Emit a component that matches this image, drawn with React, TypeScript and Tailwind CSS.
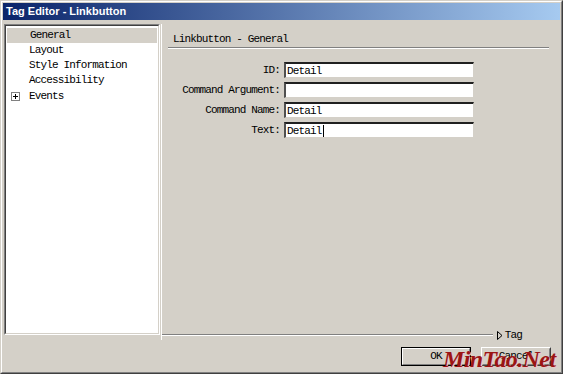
import React from "react";

const mono = { fontFamily: '"Liberation Mono", "DejaVu Sans Mono", monospace' };

function Field({ label, value, caret }: { label: string; value: string; caret?: boolean }) {
  return (
    <>
      <div className="text-right text-[11px] tracking-[-0.85px] leading-[16px] text-black pr-[4px]">{label}</div>
      <div className="h-[16px] bg-white border-t-2 border-l-2 border-t-[#202020] border-l-[#505050] border-b border-r border-b-[#d4d0c8] border-r-[#d4d0c8] flex items-center pl-[1px] text-[11px] tracking-[-0.85px] leading-[12px] text-black">
        <span>{value}</span>
        {caret && <span className="inline-block w-[1px] h-[12px] bg-black ml-[1px]" />}
      </div>
    </>
  );
}

export default function App() {
  const tree = ["General", "Layout", "Style Information", "Accessibility"];
  return (
    <div className="w-[563px] h-[374px] overflow-hidden bg-white">
      <div className="w-[563px] h-[374px] relative bg-[#d4d0c8] border border-[#d4d0c8] border-r-[#404040] border-b-[#404040] flex flex-col" style={mono}>
        <div className="border border-white border-r-[#808080] border-b-[#808080] flex-1 flex flex-col p-[1px]">
          {/* Title bar */}
          <div
            className="h-[17px] shrink-0 flex items-center pl-[3px] text-white font-bold"
            style={{ background: "linear-gradient(to right, #0a246a, #a6caf0)", fontFamily: '"Liberation Sans", Arial, sans-serif', fontSize: "11px" }}
          >
            Tag Editor - Linkbutton
          </div>

          {/* Main row */}
          <div className="flex mt-[4px] items-start">
            {/* Tree panel */}
            <div className="ml-[1px] w-[156px] h-[311px] border border-[#808080] border-r-white border-b-white">
              <div className="w-full h-full bg-white border border-[#404040] border-r-[#d4d0c8] border-b-[#d4d0c8] pt-[2px]">
                {tree.map((t, i) => (
                  <div
                    key={t}
                    className={
                      "h-[15px] flex items-center pl-[23px] text-[11px] tracking-[-0.85px] text-black " +
                      (i === 0 ? "bg-[#d4d0c8] mx-[1px] pl-[22px]" : "")
                    }
                  >
                    {t}
                  </div>
                ))}
                <div className="h-[16px] flex items-center pl-[5px] text-[11px] tracking-[-0.85px] text-black">
                  <span className="w-[9px] h-[9px] border border-[#808080] bg-white flex items-center justify-center mr-[9px] relative">
                    <span className="absolute w-[5px] h-[1px] bg-black" />
                    <span className="absolute w-[1px] h-[5px] bg-black" />
                  </span>
                  Events
                </div>
              </div>
            </div>

            {/* Right panel */}
            <div className="flex-1 flex flex-col h-[316px] border-l border-l-white ml-[1px]">
              <div className="ml-[10px] mr-[11px] pt-[8px] pl-[1px] pb-[1px] text-[11px] tracking-[-0.85px] text-black leading-[14px]">
                Linkbutton - General
              </div>
              <div className="ml-[6px] mr-[11px] h-[2px] border-t border-t-[#808080] border-b border-b-white" />
              <div className="mt-[13px] ml-[8px] grid grid-cols-[114px_190px] gap-y-[4px]">
                <Field label="ID:" value="Detail" />
                <Field label="Command Argument:" value="" />
                <Field label="Command Name:" value="Detail" />
                <Field label="Text:" value="Detail" caret />
              </div>
              <div className="flex-1" />
              <div className="flex items-center h-[10px]">
                <div className="flex-1 h-[2px] border-t border-t-[#808080] border-b border-b-white" />
                <div className="flex items-center pl-[4px] pr-[38px] text-[11px] tracking-[-0.85px] text-black leading-[10px]">
                  <svg width="6" height="9" viewBox="0 0 6 9" className="mr-[2px]">
                    <path d="M0.5 0.5 L5 4.5 L0.5 8.5 Z" fill="none" stroke="#000" strokeWidth="1" />
                  </svg>
                  Tag
                </div>
              </div>
            </div>
          </div>

          {/* Buttons */}
          <div className="flex justify-end gap-[10px] mt-[7px] pr-[9px]">
            <button className="w-[70px] h-[19px] border border-black bg-[#d4d0c8] p-0">
              <div className="w-full h-full border border-white border-r-[#808080] border-b-[#808080] flex items-center justify-center text-[11px] tracking-[-0.85px] text-black">
                OK
              </div>
            </button>
            <button className="w-[70px] h-[19px] border border-white border-r-[#404040] border-b-[#404040] bg-[#d4d0c8] p-0">
              <div className="w-full h-full border border-transparent border-r-[#808080] border-b-[#808080] flex items-center justify-center text-[11px] tracking-[-0.85px] text-black">
                Cancel
              </div>
            </button>
          </div>
        </div>

        {/* Watermark */}
        <div
          className="absolute left-[442px] top-[345px] text-[24px] italic font-bold text-[#9c1414] leading-[26px] tracking-[-0.6px]"
          style={{ fontFamily: '"Liberation Serif", serif', textShadow: "1px 1px 0 #e8c8c8" }}
        >
          MinTao.Net
        </div>
      </div>
    </div>
  );
}
